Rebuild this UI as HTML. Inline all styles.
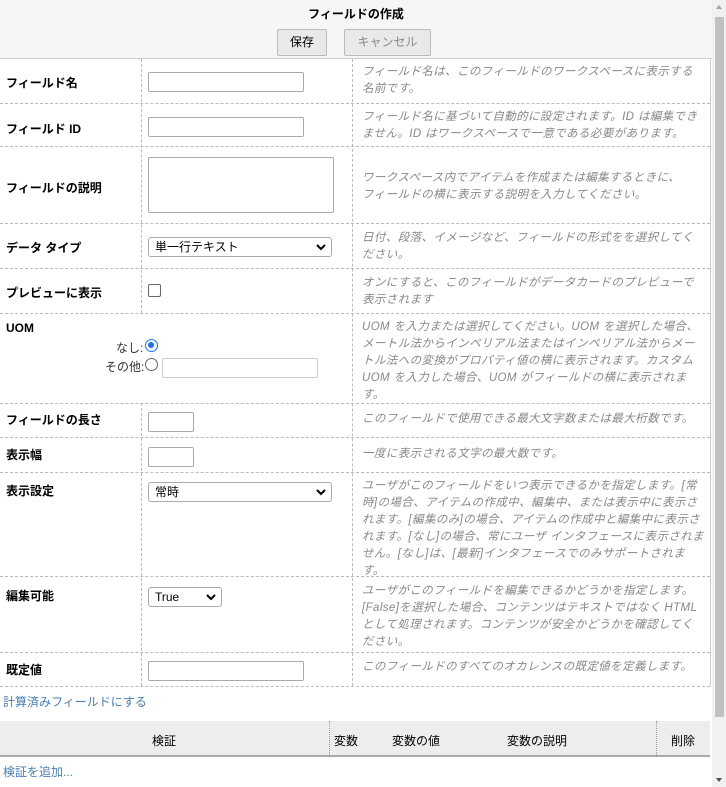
<!DOCTYPE html>
<html><head><meta charset="utf-8"><style>
*{box-sizing:border-box;margin:0;padding:0}
body{width:726px;height:787px;overflow:hidden;background:#fff;font-family:"Liberation Sans","Noto Sans CJK JP",sans-serif;position:relative;font-size:12px;color:#000}
.a{position:absolute}
.hdr{left:0;top:0;width:712px;height:59px;background:#f6f6f6;border-bottom:1px solid #ccc}
.btn{position:absolute;top:29px;height:27px;border:1px solid #bbb;border-radius:2px;background:#e9e9e9;font-size:12px;text-align:center;line-height:25px}
.hl{position:absolute;left:0;width:710px;border-top:1px dashed #bbb}
.vl{position:absolute;border-left:1px dashed #bbb}
.lab{position:absolute;left:6px;font-weight:bold;font-size:12px}
.desc{position:absolute;left:362px;width:345px;font-style:italic;color:#888;font-size:11.5px;line-height:17px;letter-spacing:0.4px;white-space:nowrap}
.in{position:absolute;left:148px;height:20px;border:1px solid #aaa;border-radius:2px;background:#fff}
.sel{position:absolute;left:148px;height:20px;border:1px solid #aaa;border-radius:3px;background:#fff;font-size:12px;line-height:18px;padding-left:6px}
.sel svg{position:absolute;right:5px;top:6px}
</style></head><body>
<div class="a hdr"></div>
<div class="a" style="left:0;top:5px;width:712px;text-align:center;font-weight:bold;font-size:12px">フィールドの作成</div>
<div class="btn" style="left:277px;width:50px">保存</div>
<div class="btn" style="left:344px;width:87px;color:#888">キャンセル</div>

<div class="vl" style="left:710px;top:59px;height:627px;border-left:1px solid #ccc"></div>
<div class="hl" style="top:103px"></div>
<div class="hl" style="top:146px"></div>
<div class="hl" style="top:223px"></div>
<div class="hl" style="top:268px"></div>
<div class="hl" style="top:313px"></div>
<div class="hl" style="top:403px"></div>
<div class="hl" style="top:437px"></div>
<div class="hl" style="top:472px"></div>
<div class="hl" style="top:576px"></div>
<div class="hl" style="top:652px"></div>
<div class="hl" style="top:686px"></div>
<div class="vl" style="left:141px;top:59px;height:254px"></div>
<div class="vl" style="left:141px;top:403px;height:283px"></div>
<div class="vl" style="left:352px;top:59px;height:627px"></div>

<div class="lab" style="top:74px">フィールド名</div>
<div class="in" style="left:148px;top:72px;width:156px"></div>
<div class="desc" style="top:64px">フィールド名は、このフィールドのワークスペースに表示する<br>名前です。</div>

<div class="lab" style="top:120px">フィールド ID</div>
<div class="in" style="top:117px;width:156px"></div>
<div class="desc" style="top:109px">フィールド名に基づいて自動的に設定されます。ID は編集でき<br>ません。ID はワークスペースで一意である必要があります。</div>

<div class="lab" style="top:179px">フィールドの説明</div>
<div class="in" style="top:157px;width:186px;height:56px"></div>
<div class="desc" style="top:170px">ワークスペース内でアイテムを作成または編集するときに、<br>フィールドの横に表示する説明を入力してください。</div>

<div class="lab" style="top:239px">データ タイプ</div>
<div class="sel" style="top:237px;width:184px">単一行テキスト<svg width="10" height="7" viewBox="0 0 10 7"><path d="M1 1l4 4 4-4" stroke="#000" stroke-width="2" fill="none"/></svg></div>
<div class="desc" style="top:230px">日付、段落、イメージなど、フィールドの形式をを選択してく<br>ださい。</div>

<div class="lab" style="top:284px">プレビューに表示</div>
<div class="a" style="left:148px;top:284px;width:13px;height:13px;border:1px solid #666;border-radius:2px"></div>
<div class="desc" style="top:275px">オンにすると、このフィールドがデータカードのプレビューで<br>表示されます</div>

<div class="lab" style="top:321px">UOM</div>
<div class="a" style="left:116px;top:339px;color:#333">なし:</div>
<div class="a" style="left:145px;top:339px;width:13px;height:13px;border-radius:50%;border:1.5px solid #1a73e8;background:#fff"><div style="position:absolute;left:2px;top:2px;width:6px;height:6px;border-radius:50%;background:#1a73e8"></div></div>
<div class="a" style="left:105px;top:358px;color:#333">その他:</div>
<div class="a" style="left:145px;top:358px;width:13px;height:13px;border-radius:50%;border:1px solid #666"></div>
<div class="in" style="left:162px;top:358px;width:156px;border-color:#ccc"></div>
<div class="desc" style="top:319px">UOM を入力または選択してください。UOM を選択した場合、<br>メートル法からインペリアル法またはインペリアル法からメー<br>トル法への変換がプロパティ値の横に表示されます。カスタム<br>UOM を入力した場合、UOM がフィールドの横に表示されま<br>す。</div>

<div class="lab" style="top:411px">フィールドの長さ</div>
<div class="in" style="top:412px;width:46px"></div>
<div class="desc" style="top:411px">このフィールドで使用できる最大文字数または最大桁数です。</div>

<div class="lab" style="top:446px">表示幅</div>
<div class="in" style="top:447px;width:46px"></div>
<div class="desc" style="top:446px">一度に表示される文字の最大数です。</div>

<div class="lab" style="top:482px">表示設定</div>
<div class="sel" style="top:482px;width:184px">常時<svg width="10" height="7" viewBox="0 0 10 7"><path d="M1 1l4 4 4-4" stroke="#000" stroke-width="2" fill="none"/></svg></div>
<div class="desc" style="top:478px">ユーザがこのフィールドをいつ表示できるかを指定します。[常<br>時]の場合、アイテムの作成中、編集中、または表示中に表示さ<br>れます。[編集のみ]の場合、アイテムの作成中と編集中に表示さ<br>れます。[なし]の場合、常にユーザ インタフェースに表示されま<br>せん。[なし]は、[最新]インタフェースでのみサポートされま<br>す。</div>

<div class="lab" style="top:587px">編集可能</div>
<div class="sel" style="top:587px;width:74px">True<svg width="10" height="7" viewBox="0 0 10 7"><path d="M1 1l4 4 4-4" stroke="#000" stroke-width="2" fill="none"/></svg></div>
<div class="desc" style="top:583px">ユーザがこのフィールドを編集できるかどうかを指定します。<br>[False]を選択した場合、コンテンツはテキストではなく HTML<br>として処理されます。コンテンツが安全かどうかを確認してく<br>ださい。</div>

<div class="lab" style="top:661px">既定値</div>
<div class="in" style="top:661px;width:156px"></div>
<div class="desc" style="top:659px">このフィールドのすべてのオカレンスの既定値を定義します。</div>

<div class="a" style="left:3px;top:693px;color:#4a7eb0;font-size:12px">計算済みフィールドにする</div>

<div class="a" style="left:0;top:721px;width:710px;height:36px;background:#ededed;border-bottom:2px solid #aaa"></div>
<div class="vl" style="left:329px;top:721px;height:36px;border-left:1px dotted #999"></div>
<div class="vl" style="left:656px;top:721px;height:36px;border-left:1px dotted #999"></div>
<div class="a" style="left:152px;top:732px">検証</div>
<div class="a" style="left:334px;top:732px">変数</div>
<div class="a" style="left:392px;top:732px">変数の値</div>
<div class="a" style="left:507px;top:732px">変数の説明</div>
<div class="a" style="left:671px;top:732px">削除</div>
<div class="a" style="left:3px;top:763px;color:#4a7eb0">検証を追加...</div>

<div class="a" style="left:712px;top:0;width:14px;height:787px;background:#f1f1f1"></div>
<div class="a" style="left:715px;top:17px;width:9px;height:700px;background:#c1c1c1"></div>
<div class="a" style="left:716px;top:5px;width:0;height:0;border-left:3px solid transparent;border-right:3px solid transparent;border-bottom:4px solid #a3a3a3"></div>
<div class="a" style="left:716px;top:778px;width:0;height:0;border-left:3px solid transparent;border-right:3px solid transparent;border-top:4px solid #505050"></div>
</body></html>
